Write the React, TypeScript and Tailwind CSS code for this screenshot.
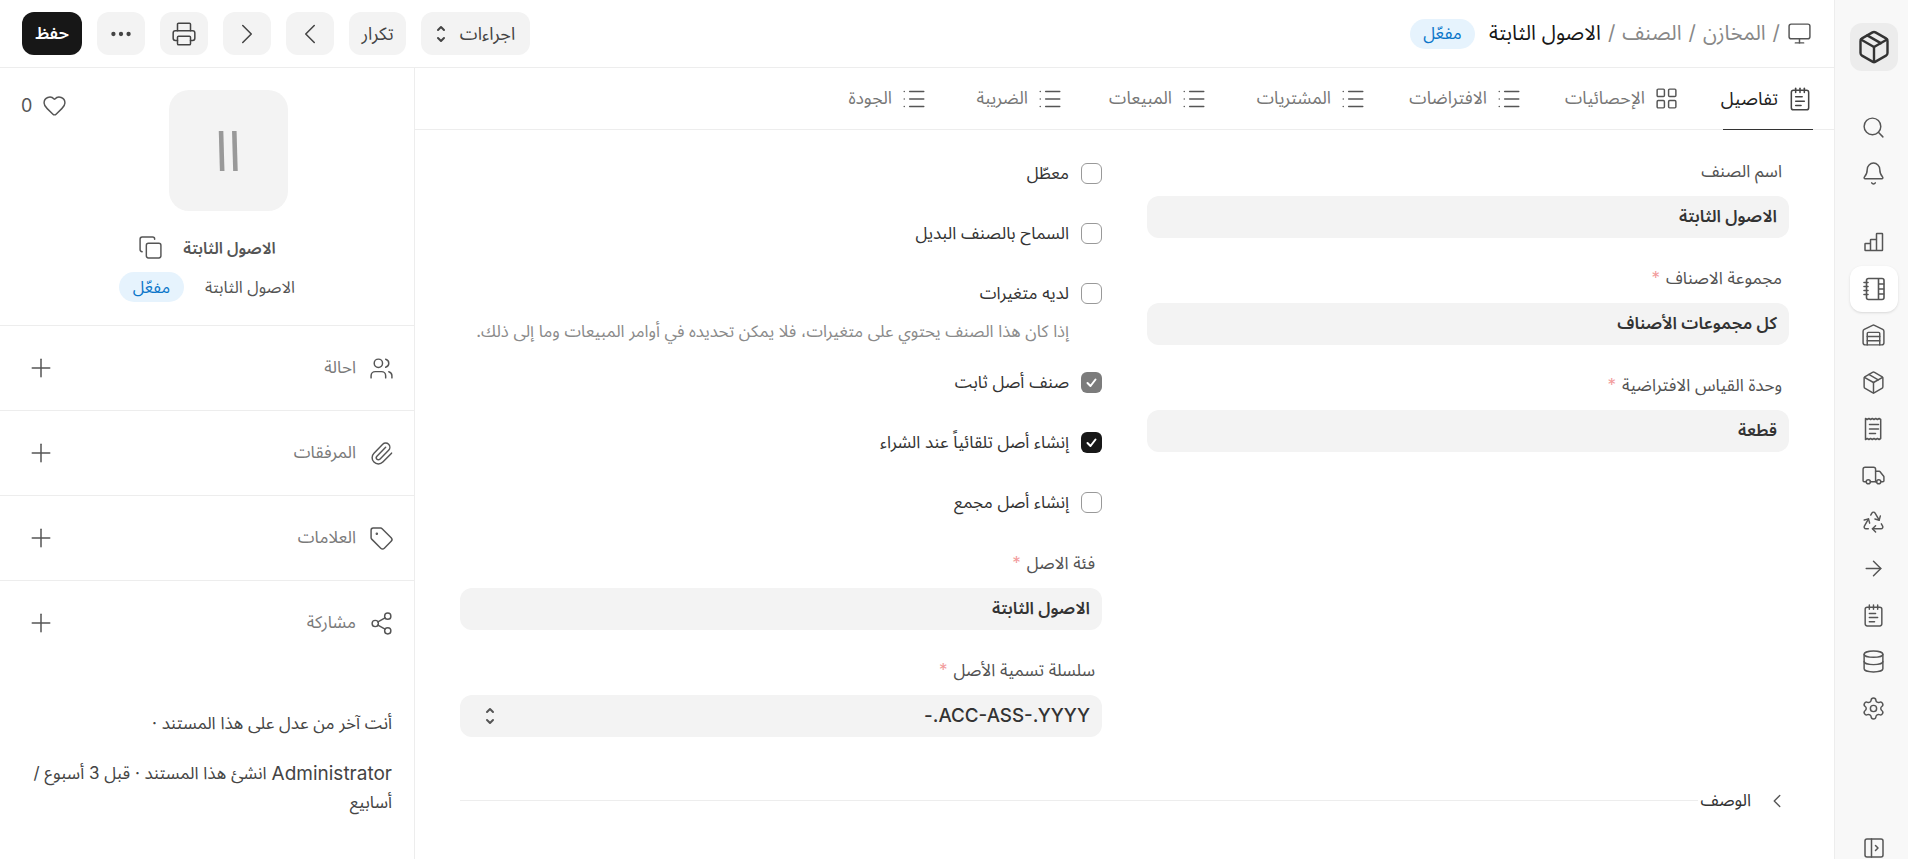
import {
  ArrowRight, Bell, ChevronLeft, ChevronRight, Copy, Database, Ellipsis, Heart,
  LayoutGrid, List, Monitor, NotepadText, Package, Paperclip, Plus, Printer, Recycle,
  Search, Settings, Share2, Tag, Truck, Users, Warehouse,
} from "lucide-react";

const ChartIcon = () => (
  <svg width="20" height="20" viewBox="0 0 20 20" fill="none" stroke="currentColor" strokeWidth="1.5" strokeLinejoin="round">
    <path d="M1 12c0-.3.2-.5.5-.5h5V18.500h-5a.5.5 0 0 1-.5-.5zM6.500 8c0-.3.2-.5.500-.5h5.500v11h-6zM12.500 2c0-.3.2-.5.500-.5h5c.3 0 .5.200.5.500v16c0 .3-.2.500-.5.500h-5.500z" />
  </svg>
);

const NotebookIcon = () => (
  <svg width="22" height="24" viewBox="0 0 22 24" fill="none" stroke="currentColor" strokeWidth="1.6" strokeLinecap="round">
    <rect x="3.500" y="1.500" width="17.500" height="21" rx="2" />
    <path d="M15.500 2v20M15.500 7h5M15.500 12h5M15.500 17h5M1 5.500h4M1 9.500h4M1 13.500h4M1 17.500h4" />
  </svg>
);

const ReceiptIcon = () => (
  <svg width="20" height="24" viewBox="0 0 20 24" fill="none" stroke="currentColor" strokeWidth="1.5" strokeLinecap="round" strokeLinejoin="round">
    <path d="M1.500 1.500l1.700 1 1.700-1 1.700 1 1.700-1 1.700 1 1.700-1 1.700 1 1.700-1 1.600 1V21.500l-1.600 1-1.700-1-1.700 1-1.700-1-1.700 1-1.700-1-1.700 1-1.700-1-1.700 1z" />
    <path d="M5.500 7.500h9M5.500 12h9M5.500 16.500h6" />
  </svg>
);

const PanelIcon = () => (
  <svg width="20" height="20" viewBox="0 0 20 20" fill="none" stroke="currentColor" strokeWidth="1.5" strokeLinecap="round" strokeLinejoin="round">
    <rect x="1" y="1" width="18" height="18" rx="2" />
    <path d="M7.500 1v18M11.500 7.500l2.500 2.500-2.500 2.500" />
  </svg>
);

const UpDownIcon = () => (
  <svg width="10" height="18" viewBox="0 0 10 18" fill="none" stroke="currentColor" strokeWidth="2" strokeLinecap="round" strokeLinejoin="round">
    <path d="M2 5l3-3 3 3M2 13l3 3 3-3" />
  </svg>
);

const rail = [
  { icon: <ChartIcon /> },
  { icon: <NotebookIcon />, active: true },
  { icon: <Warehouse size={25} strokeWidth={1.4} /> },
  { icon: <Package size={25} strokeWidth={1.4} /> },
  { icon: <ReceiptIcon /> },
  { icon: <Truck size={25} strokeWidth={1.4} /> },
  { icon: <Recycle size={25} strokeWidth={1.4} /> },
  { icon: <ArrowRight size={25} strokeWidth={1.4} /> },
  { icon: <NotepadText size={25} strokeWidth={1.4} /> },
  { icon: <Database size={25} strokeWidth={1.4} /> },
  { icon: <Settings size={25} strokeWidth={1.4} /> },
];

const tabs = [
  { label: "تفاصيل", width: "w-[55px]", icon: <NotepadText size={26} strokeWidth={1.4} />, active: true },
  { label: "الإحصائيات", width: "w-[79px]", icon: <LayoutGrid size={25} strokeWidth={1.4} /> },
  { label: "الافتراضات", width: "w-[77px]" },
  { label: "المشتريات", width: "w-[80px]" },
  { label: "المبيعات", width: "w-[65px]" },
  { label: "الضريبة", width: "w-[57px]" },
  { label: "الجودة", width: "w-[47px]" },
];

const sideRows = [
  { label: "احالة", icon: <Users size={25} strokeWidth={1.4} /> },
  { label: "المرفقات", icon: <Paperclip size={25} strokeWidth={1.4} /> },
  { label: "العلامات", icon: <Tag size={25} strokeWidth={1.4} /> },
  { label: "مشاركة", icon: <Share2 size={25} strokeWidth={1.4} /> },
];

function Field({ label, value, required, select }: { label: string; value: string; required?: boolean; select?: boolean }) {
  return (
    <div className="flex flex-col">
      <label className="flex items-center h-[24px] gap-1.5 pr-[7px] text-[17px] text-[#525252]">
        {label}
        {required && <span className="text-[#f29b9b]">*</span>}
      </label>
      <div className="mt-[12px] flex h-[42px] items-center justify-between rounded-[12px] bg-[#f3f3f3] pr-[12px] pl-[25px] text-[17px] font-semibold text-[#333]">
        <span className={select ? "text-[18.800px] font-medium" : ""}>{value}</span>
        {select && <span className="text-[#555]"><UpDownIcon /></span>}
      </div>
    </div>
  );
}

function Check({ label, state, help }: { label: string; state?: "muted" | "on"; help?: string }) {
  return (
    <div className="flex flex-col">
      <div className="flex items-center gap-[12px] h-[21px]">
        <span
          className={
            state === "on"
              ? "flex size-[21px] items-center justify-center rounded-[6px] bg-[#171717] text-white"
              : state === "muted"
                ? "flex size-[21px] items-center justify-center rounded-[6px] bg-[#7c7c7c] text-white"
                : "size-[21px] rounded-[6px] border border-[#999] bg-white"
          }
        >
          {state && (
            <svg width="13" height="13" viewBox="0 0 13 13" fill="none" stroke="currentColor" strokeWidth="2" strokeLinecap="round" strokeLinejoin="round">
              <path d="M2.500 7l3 3 5-6.500" />
            </svg>
          )}
        </span>
        <span className="text-[17px] text-[#333]">{label}</span>
      </div>
      {help && <p className="mt-[15px] -mb-[11px] pr-[33px] text-[16.700px] text-[#8a8a8a]">{help}</p>}
    </div>
  );
}

function Header() {
  return (
    <header className="flex h-[68px] shrink-0 items-center justify-between border-b border-[#ededed] pr-[22px] pl-[22px]">
      <div className="flex items-center gap-[14px]">
        <div className="flex items-center gap-[7px] text-[20.500px] text-[#888]">
          <Monitor size={25} strokeWidth={1.4} className="text-[#555]" />
          <span>/</span>
          <span>المخازن</span>
          <span>/</span>
          <span>الصنف</span>
          <span>/</span>
          <span className="text-[#171717]">الاصول الثابتة</span>
        </div>
        <span className="flex h-[30px] w-[65px] items-center justify-center rounded-full bg-[#e6f3fd] text-[17px] text-[#0b76c9]">مفعّل</span>
      </div>
      <div className="flex items-center gap-[15px] text-[#444]">
        <button className="flex h-[43px] w-[109px] items-center justify-center gap-[14px] rounded-[12px] bg-[#f3f3f3] text-[18px]">
          اجراءات
          <UpDownIcon />
        </button>
        <button className="flex h-[43px] w-[57px] items-center justify-center rounded-[12px] bg-[#f3f3f3] text-[18px]">تكرار</button>
        <button className="flex h-[43px] w-[48px] items-center justify-center rounded-[12px] bg-[#f3f3f3]"><ChevronLeft size={34} strokeWidth={1.1} /></button>
        <button className="flex h-[43px] w-[48px] items-center justify-center rounded-[12px] bg-[#f3f3f3]"><ChevronRight size={34} strokeWidth={1.1} /></button>
        <button className="flex h-[43px] w-[48px] items-center justify-center rounded-[12px] bg-[#f3f3f3]"><Printer size={26} strokeWidth={1.4} /></button>
        <button className="flex h-[43px] w-[48px] items-center justify-center rounded-[12px] bg-[#f3f3f3]"><Ellipsis size={26} strokeWidth={2} /></button>
        <button className="flex h-[43px] w-[60px] items-center justify-center rounded-[12px] bg-[#171717] text-[17px] font-semibold text-white">حفظ</button>
      </div>
    </header>
  );
}

export default function App() {
  return (
    <div dir="rtl" className="flex h-[859px] w-[1908px] overflow-hidden bg-white font-['Inter','Noto_Sans_Arabic',sans-serif]">
      {/* icon rail */}
      <aside className="flex w-[74px] shrink-0 flex-col items-center border-l border-[#ededed] bg-[#f8f8f8] pl-[4px] text-[#555]">
        <div className="mt-[23px] flex size-[48px] items-center justify-center rounded-[12px] bg-[#ececec] text-[#333]">
          <Package size={36} strokeWidth={1.6} />
        </div>
        <div className="mt-[33px] flex h-[46px] items-center"><Search size={25} strokeWidth={1.4} /></div>
        <div className="flex h-[46px] items-center"><Bell size={25} strokeWidth={1.4} /></div>
        <div className="mt-[23px] flex w-full flex-col items-center">
          {rail.map((item, i) => (
            <div key={i} className="flex h-[46.600px] items-center">
              {item.active ? (
                <div className="flex h-[46px] w-[48px] items-center justify-center rounded-[12px] bg-white shadow-sm">{item.icon}</div>
              ) : (
                item.icon
              )}
            </div>
          ))}
        </div>
        <div className="mt-auto mb-[1px] flex h-[20px] items-center"><PanelIcon /></div>
      </aside>

      <div className="flex min-w-0 flex-1 flex-col">
        <Header />
        <div className="flex min-h-0 flex-1">
          {/* form */}
          <main className="min-w-0 flex-1">
            <nav className="flex h-[62px] items-end gap-[44px] border-b border-[#ededed] pr-[21px]">
              {tabs.map((t) => (
                <div key={t.label} className={t.active ? "flex h-[61px] items-center gap-[9px] border-b border-[#333] text-[18.500px] text-[#222] -mb-px" : "flex h-[61px] items-center gap-[9px] text-[17.500px] text-[#777]"}>
                  <span className={t.active ? "text-[#444]" : "text-[#555]"}>{t.icon ?? <List size={26} strokeWidth={1.4} />}</span>
                  <span className={`${t.width} whitespace-nowrap`}>{t.label}</span>
                </div>
              ))}
            </nav>
            <div className="px-[45px]">
              <div className="grid grid-cols-2 gap-[45px] pt-[30px]">
                <div className="flex flex-col gap-[29px]">
                  <Field label="اسم الصنف" value="الاصول الثابتة" />
                  <Field label="مجموعة الاصناف" value="كل مجموعات الأصناف" required />
                  <Field label="وحدة القياس الافتراضية" value="قطعة" required />
                </div>
                <div className="flex flex-col">
                  <div className="flex flex-col gap-[39px] pt-[3px]">
                    <Check label="معطّل" />
                    <Check label="السماح بالصنف البديل" />
                    <Check label="لديه متغيرات" help="إذا كان هذا الصنف يحتوي على متغيرات، فلا يمكن تحديده في أوامر المبيعات وما إلى ذلك." />
                    <Check label="صنف أصل ثابت" state="muted" />
                    <Check label="إنشاء أصل تلقائياً عند الشراء" state="on" />
                    <Check label="إنشاء أصل مجمع" />
                  </div>
                  <div className="mt-[39px] flex flex-col gap-[29px]">
                    <Field label="فئة الاصل" value="الاصول الثابتة" required />
                    <Field label="سلسلة تسمية الأصل" value="ACC-ASS-.YYYY.-" required select />
                  </div>
                </div>
              </div>
              <div className="mt-[51px] flex items-center">
                <span className="flex items-center gap-[15px] pr-[1px] pl-[2px] text-[17px] text-[#333]">
                  <ChevronLeft size={22} strokeWidth={1.5} className="text-[#555]" />
                  الوصف
                </span>
                <span className="h-px flex-1 bg-[#ededed]" />
              </div>
            </div>
          </main>

          {/* document sidebar */}
          <section className="w-[415px] shrink-0 border-r border-[#ededed]">
            <div className="relative flex flex-col items-center pt-[22px]">
              <div className="absolute top-[24px] left-[21px] flex items-center gap-[10px] text-[18px] text-[#555]">
                <Heart size={25} strokeWidth={1.4} />
                <span>0</span>
              </div>
              <div className="ml-[42px] flex h-[121px] w-[119px] items-center justify-center rounded-[20px] bg-[#f3f3f3] text-[56px] text-[#999]">اا</div>
              <div className="mt-[24px] flex items-center gap-[20px] text-[16px] font-semibold text-[#555]">
                الاصول الثابتة
                <Copy size={25} strokeWidth={1.4} />
              </div>
              <div className="mt-[12px] mb-[23px] flex items-center gap-[21px] text-[16.500px] text-[#555]">
                الاصول الثابتة
                <span className="flex h-[30px] w-[65px] items-center justify-center rounded-full bg-[#e6f3fd] text-[#0b76c9]">مفعّل</span>
              </div>
            </div>
            {sideRows.map((r) => (
              <div key={r.label} className="flex h-[85px] items-center justify-between border-t border-[#ededed] pr-[20px] pl-[26px] text-[#555] last:h-[86px] last:border-b">
                <div className="flex items-center gap-[13px] text-[17px] text-[#7a7a7a]">
                  <span className="text-[#555]">{r.icon}</span>
                  {r.label}
                </div>
                <Plus size={30} strokeWidth={1.2} />
              </div>
            ))}
            <div className="pt-[44px] pr-[22px] pl-[24px] text-[17px] leading-[29px] text-[#444]">
              <p>أنت آخر من عدل على هذا المستند ·</p>
              <div className="mt-[21px]">
                <p className="flex items-center gap-[5px] whitespace-nowrap">
                  <span className="text-[19px]">Administrator</span>
                  <span>انشئ هذا المستند · قبل 3 أسبوع /</span>
                </p>
                <p>أسابيع</p>
              </div>
            </div>
          </section>
        </div>
      </div>
    </div>
  );
}
